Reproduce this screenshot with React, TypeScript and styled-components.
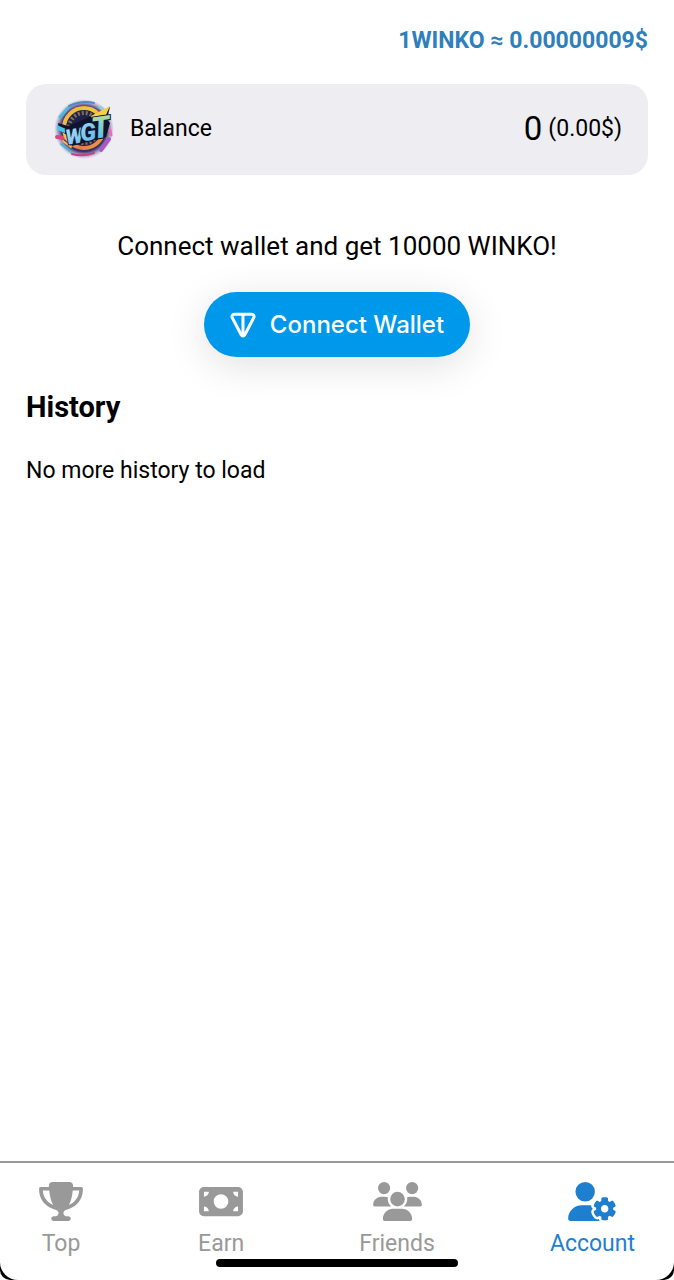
import styled, { createGlobalStyle } from 'styled-components'
import { FaMoneyBill, FaTrophy, FaUserGear, FaUsers } from 'react-icons/fa6'
import type { IconType } from 'react-icons'

type navItemType = {
  label: string
  icon: IconType
  iconWidth: number
  isActive?: boolean
}

const navItems: navItemType[] = [
  { label: 'Top', icon: FaTrophy, iconWidth: 44 },
  { label: 'Earn', icon: FaMoneyBill, iconWidth: 44 },
  { label: 'Friends', icon: FaUsers, iconWidth: 49 },
  { label: 'Account', icon: FaUserGear, iconWidth: 49, isActive: true },
]

const TokenLogo = () => (
  <Logo viewBox="0 0 60 60" role="img" aria-label="WGT">
    <defs>
      <radialGradient id="halo">
        <stop offset="0.75" stopColor="#3b3068" />
        <stop offset="1" stopColor="#8577b8" stopOpacity="0" />
      </radialGradient>
      <linearGradient id="ring" x1="0" y1="0" x2="1" y2="1">
        <stop offset="0" stopColor="#e9b04a" />
        <stop offset="0.4" stopColor="#f3c93f" />
        <stop offset="0.7" stopColor="#e8794c" />
        <stop offset="1" stopColor="#f0a63c" />
      </linearGradient>
      <linearGradient id="letters" x1="0" y1="0" x2="1" y2="1">
        <stop offset="0" stopColor="#c4f0fc" />
        <stop offset="1" stopColor="#3fa4e4" />
      </linearGradient>
      <linearGradient id="letterT" x1="0" y1="0" x2="0" y2="1">
        <stop offset="0" stopColor="#e8e070" />
        <stop offset="0.4" stopColor="#7ed6cf" />
        <stop offset="1" stopColor="#58b4f0" />
      </linearGradient>
    </defs>
    <circle cx="30" cy="30" r="30" fill="url(#halo)" />
    <g fill="none" strokeLinecap="round">
      <path d="M6 18 14 9" stroke="#4cb8dc" strokeWidth="3" />
      <path d="M15 7q13-6 25-3" stroke="#4a8cc4" strokeWidth="2" />
      <path d="M46 8q7 5 9 11" stroke="#8fd0dc" strokeWidth="3" />
      <path d="M3 38l8 1" stroke="#e0447e" strokeWidth="4" />
      <path d="M7 45l10 8" stroke="#46b7dd" strokeWidth="2" />
      <path d="M9 42l8 6" stroke="#f0c04a" strokeWidth="2" />
      <path d="M18 55q11 3 22-1" stroke="#c93f86" strokeWidth="2" />
      <path d="M47 51l8-11" stroke="#a75ac4" strokeWidth="4" />
      <path d="M56 31l1 5" stroke="#e86fb0" strokeWidth="3" />
    </g>
    <circle cx="30" cy="29" r="20" fill="#1b2348" stroke="url(#ring)" strokeWidth="4" />
    <circle cx="30" cy="29" r="15" fill="none" stroke="#8a6b58" strokeWidth="4" strokeDasharray="2 2" />
    <path d="M4 24l10 3 26-11 16-8-3 12 3 4-4 14-34 9-5-11-8-5z" fill="#10132e" />
    <path d="M37 17 56 7l-4 9-13 5z" fill="#f7cf45" />
    <path d="M3 26l9 4-1 4-8-3z" fill="#4cc3ea" />
    <LogoText transform="rotate(-8 31 34)">
      <tspan x="11" y="43" fontSize="21" fill="url(#letters)">
        W
      </tspan>
      <tspan x="26" y="42" fontSize="24" fill="url(#letters)">
        G
      </tspan>
      <tspan x="38" y="41" fontSize="30" fill="url(#letterT)">
        T
      </tspan>
    </LogoText>
  </Logo>
)

const TonIcon = () => (
  <svg width="28" height="28" viewBox="0 0 28 28" fill="none" aria-hidden="true">
    <path
      d="M4.300 3.200h17.400c1.900 0 3 2 2 3.600L14.700 24c-.8 1.300-2.600 1.300-3.400 0L2.300 6.800c-1-1.600.1-3.600 2-3.600zM13 3.200v21"
      stroke="#fff"
      strokeWidth="3"
      strokeLinejoin="round"
    />
  </svg>
)

const App = () => {
  return (
    <>
      <GlobalStyle />
      <Frame>
        <Screen>
          <Content>
            <Rate>1WINKO ≈ 0.00000009$</Rate>
            <BalanceCard>
              <TokenLogo />
              <span>Balance</span>
              <Amount>
                <strong>0</strong> (0.00$)
              </Amount>
            </BalanceCard>
            <WalletSection>
              <p>Connect wallet and get 10000 WINKO!</p>
              <ConnectButton type="button">
                <TonIcon />
                Connect Wallet
              </ConnectButton>
            </WalletSection>
            <History>
              <h2>History</h2>
              <p>No more history to load</p>
            </History>
          </Content>
          <BottomBar>
            <Nav>
              {navItems.map(({ label, icon: Icon, iconWidth, isActive }) => (
                <NavLink
                  key={label}
                  href={`#${label.toLowerCase()}`}
                  $iconWidth={iconWidth}
                  $isActive={isActive}
                  aria-current={isActive ? 'page' : undefined}
                >
                  <Icon />
                  {label}
                </NavLink>
              ))}
            </Nav>
            <HomeIndicator />
          </BottomBar>
        </Screen>
      </Frame>
    </>
  )
}

const GlobalStyle = createGlobalStyle`
  * {
    box-sizing: border-box;
  }
  body {
    margin: 0;
    background-color: #fff;
    color: #000;
    font-family: Roboto, sans-serif;
    font-size: 23px;
    line-height: 28px;
  }
  h2,
  p {
    margin: 0;
  }
`

const Frame = styled.div`
  border-radius: 0 0 10px 10px;
  background-color: #000;
`

const Screen = styled.div`
  min-height: 100vh;
  display: flex;
  flex-direction: column;
  background-color: #fff;
  border-radius: 0 0 18px 18px;
  overflow: hidden;
`

const Content = styled.main`
  flex: 1;
  padding: 27px 26px;
`

const Rate = styled.p`
  color: #2e7fbc;
  font-weight: 700;
  text-align: right;
`

const BalanceCard = styled.section`
  display: flex;
  align-items: center;
  gap: 16px;
  margin-top: 29px;
  padding: 14px 26px 15px 28px;
  border-radius: 20px;
  background-color: #eeedf2;
`

const Logo = styled.svg`
  width: 60px;
  height: 62px;
`

const LogoText = styled.text`
  font-family: Roboto, sans-serif;
  font-weight: 900;
  font-style: italic;
  stroke: #10132e;
  stroke-width: 2px;
  paint-order: stroke;
`

const Amount = styled.span`
  display: flex;
  align-items: center;
  gap: 6px;
  margin-left: auto;
  strong {
    font-size: 33px;
    font-weight: 400;
  }
`

const WalletSection = styled.section`
  display: flex;
  flex-direction: column;
  align-items: center;
  gap: 30px;
  margin-top: 55px;
  font-size: 26px;
  line-height: 32px;
`

const ConnectButton = styled.button`
  display: flex;
  align-items: center;
  gap: 12px;
  height: 65px;
  padding: 0 26px;
  border: none;
  border-radius: 33px;
  background-color: #0098ea;
  box-shadow: 0 8px 40px rgba(0, 0, 0, 0.12);
  color: #fff;
  font-family: Inter, sans-serif;
  font-size: 24px;
  font-weight: 500;
`

const History = styled.section`
  margin-top: 32px;
  h2 {
    margin-bottom: 32px;
    font-size: 29px;
    font-weight: 700;
    line-height: 36px;
  }
`

const BottomBar = styled.footer`
  border-top: 2px solid #999;
  padding-bottom: 13px;
`

const Nav = styled.nav`
  display: flex;
  justify-content: space-between;
  padding: 19px 39px 1px;
`

const NavLink = styled.a<{ $iconWidth: number; $isActive?: boolean }>`
  display: flex;
  flex-direction: column;
  align-items: center;
  gap: 9px;
  color: ${(props) => (props.$isActive ? '#1f7fcf' : '#999')};
  text-decoration: none;
  svg {
    width: ${(props) => props.$iconWidth}px;
    height: 39px;
  }
`

const HomeIndicator = styled.div`
  width: 36%;
  height: 8px;
  margin: 0 auto;
  border-radius: 4px;
  background-color: #000;
`

export default App
